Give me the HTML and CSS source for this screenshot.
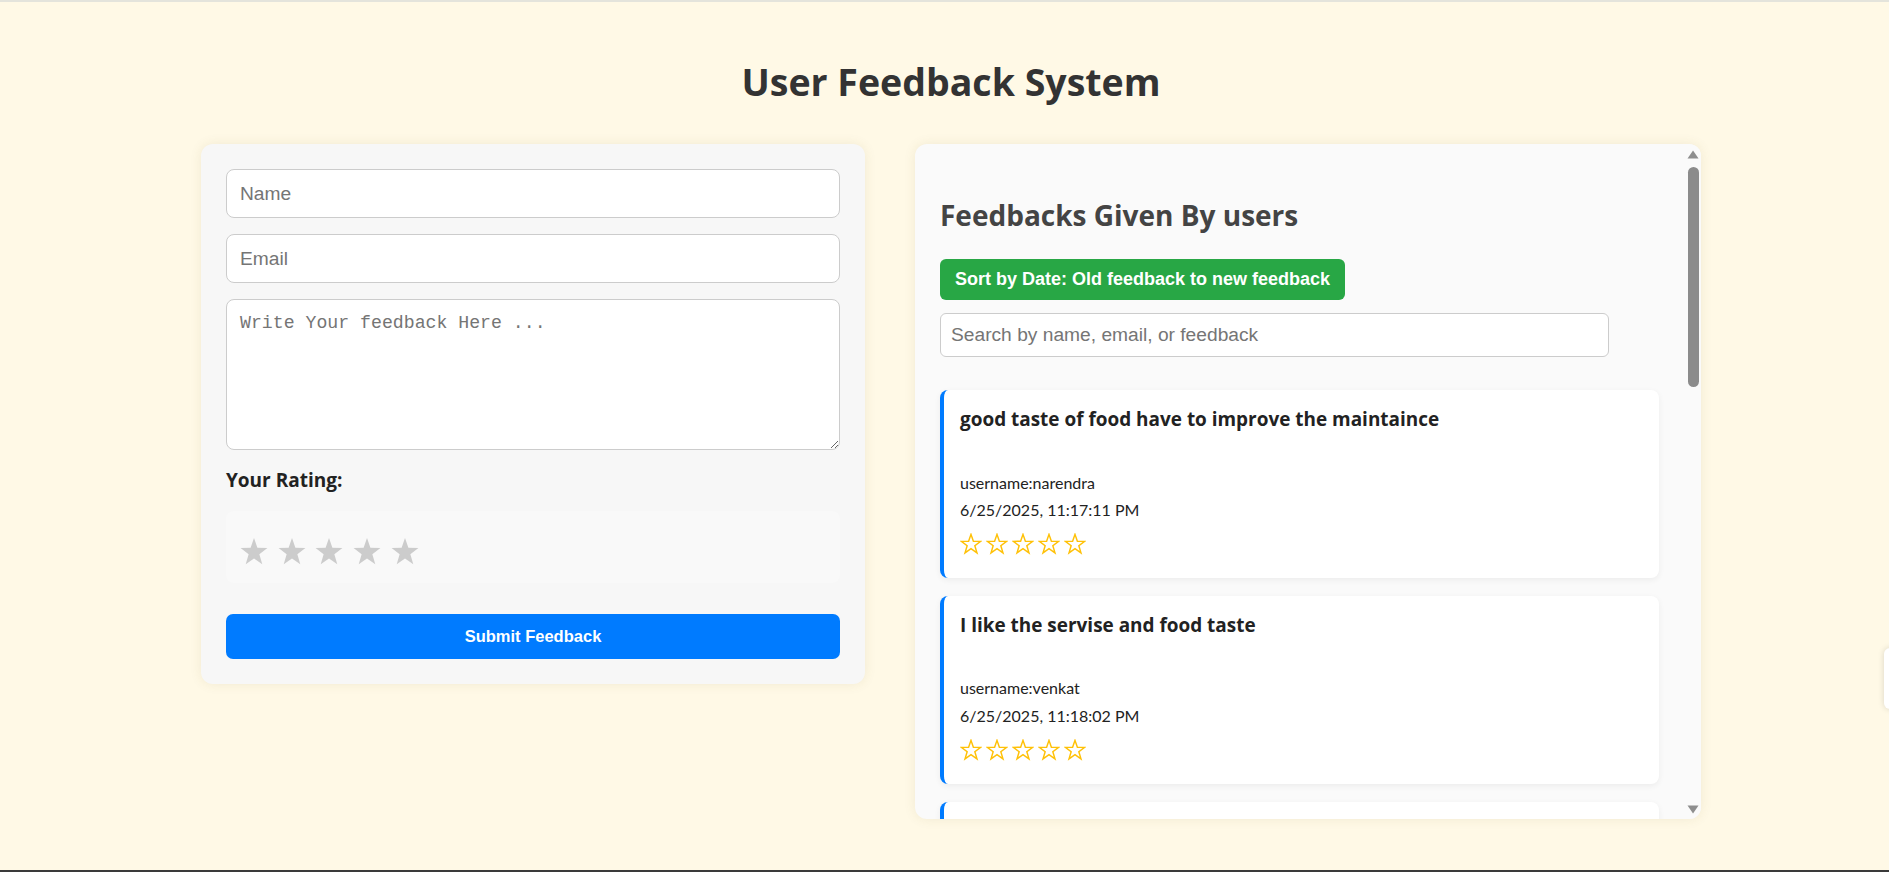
FILE: index.html
```html
<!DOCTYPE html>
<html lang="en">
<head>
<meta charset="utf-8">
<title>User Feedback System</title>
<link rel="stylesheet" href="styles.css">
</head>
<body>
<div class="page">
  <h1 class="title">User Feedback System</h1>
  <div class="layout">
    <form class="form-card">
      <input class="field" type="text" placeholder="Name">
      <input class="field" type="email" placeholder="Email">
      <textarea class="field field-area" placeholder="Write Your feedback Here ..."></textarea>
      <label class="rating-label">Your Rating:</label>
      <div class="stars-box">
        <svg class="star-big" viewBox="0 0 24 23"><polygon points="12,0 14.9,8.3 23.5,8.5 16.6,13.8 19.1,22.5 12,17.4 4.9,22.5 7.4,13.8 0.5,8.5 9.1,8.3"/></svg>
        <svg class="star-big" viewBox="0 0 24 23"><polygon points="12,0 14.9,8.3 23.5,8.5 16.6,13.8 19.1,22.5 12,17.4 4.9,22.5 7.4,13.8 0.5,8.5 9.1,8.3"/></svg>
        <svg class="star-big" viewBox="0 0 24 23"><polygon points="12,0 14.9,8.3 23.5,8.5 16.6,13.8 19.1,22.5 12,17.4 4.9,22.5 7.4,13.8 0.5,8.5 9.1,8.3"/></svg>
        <svg class="star-big" viewBox="0 0 24 23"><polygon points="12,0 14.9,8.3 23.5,8.5 16.6,13.8 19.1,22.5 12,17.4 4.9,22.5 7.4,13.8 0.5,8.5 9.1,8.3"/></svg>
        <svg class="star-big" viewBox="0 0 24 23"><polygon points="12,0 14.9,8.3 23.5,8.5 16.6,13.8 19.1,22.5 12,17.4 4.9,22.5 7.4,13.8 0.5,8.5 9.1,8.3"/></svg>
      </div>
      <button class="submit" type="button">Submit Feedback</button>
    </form>

    <section class="list-card">
      <div class="list-scroll">
        <h2 class="list-title">Feedbacks Given By users</h2>
        <button class="sort-btn" type="button">Sort by Date: Old feedback to new feedback</button>
        <input class="search" type="text" placeholder="Search by name, email, or feedback">

        <div class="fb-item">
          <h3 class="fb-text">good taste of food have to improve the maintaince</h3>
          <div class="fb-user">username:narendra</div>
          <div class="fb-date">6/25/2025, 11:17:11 PM</div>
          <div class="fb-stars">
            <svg class="star-o" viewBox="0 0 24 24"><polygon points="12,1.5 14.6,9 22.5,9.1 16.2,13.9 18.5,21.6 12,17 5.5,21.6 7.8,13.9 1.5,9.1 9.4,9"/></svg>
            <svg class="star-o" viewBox="0 0 24 24"><polygon points="12,1.5 14.6,9 22.5,9.1 16.2,13.9 18.5,21.6 12,17 5.5,21.6 7.8,13.9 1.5,9.1 9.4,9"/></svg>
            <svg class="star-o" viewBox="0 0 24 24"><polygon points="12,1.5 14.6,9 22.5,9.1 16.2,13.9 18.5,21.6 12,17 5.5,21.6 7.8,13.9 1.5,9.1 9.4,9"/></svg>
            <svg class="star-o" viewBox="0 0 24 24"><polygon points="12,1.5 14.6,9 22.5,9.1 16.2,13.9 18.5,21.6 12,17 5.5,21.6 7.8,13.9 1.5,9.1 9.4,9"/></svg>
            <svg class="star-o" viewBox="0 0 24 24"><polygon points="12,1.5 14.6,9 22.5,9.1 16.2,13.9 18.5,21.6 12,17 5.5,21.6 7.8,13.9 1.5,9.1 9.4,9"/></svg>
          </div>
        </div>

        <div class="fb-item">
          <h3 class="fb-text">I like the servise and food taste</h3>
          <div class="fb-user">username:venkat</div>
          <div class="fb-date">6/25/2025, 11:18:02 PM</div>
          <div class="fb-stars">
            <svg class="star-o" viewBox="0 0 24 24"><polygon points="12,1.5 14.6,9 22.5,9.1 16.2,13.9 18.5,21.6 12,17 5.5,21.6 7.8,13.9 1.5,9.1 9.4,9"/></svg>
            <svg class="star-o" viewBox="0 0 24 24"><polygon points="12,1.5 14.6,9 22.5,9.1 16.2,13.9 18.5,21.6 12,17 5.5,21.6 7.8,13.9 1.5,9.1 9.4,9"/></svg>
            <svg class="star-o" viewBox="0 0 24 24"><polygon points="12,1.5 14.6,9 22.5,9.1 16.2,13.9 18.5,21.6 12,17 5.5,21.6 7.8,13.9 1.5,9.1 9.4,9"/></svg>
            <svg class="star-o" viewBox="0 0 24 24"><polygon points="12,1.5 14.6,9 22.5,9.1 16.2,13.9 18.5,21.6 12,17 5.5,21.6 7.8,13.9 1.5,9.1 9.4,9"/></svg>
            <svg class="star-o" viewBox="0 0 24 24"><polygon points="12,1.5 14.6,9 22.5,9.1 16.2,13.9 18.5,21.6 12,17 5.5,21.6 7.8,13.9 1.5,9.1 9.4,9"/></svg>
          </div>
        </div>

        <div class="fb-item">
          <h3 class="fb-text">food is good but the waiting time is long</h3>
          <div class="fb-user">username:ravi</div>
          <div class="fb-date">6/25/2025, 11:19:40 PM</div>
          <div class="fb-stars">
            <svg class="star-o" viewBox="0 0 24 24"><polygon points="12,1.5 14.6,9 22.5,9.1 16.2,13.9 18.5,21.6 12,17 5.5,21.6 7.8,13.9 1.5,9.1 9.4,9"/></svg>
            <svg class="star-o" viewBox="0 0 24 24"><polygon points="12,1.5 14.6,9 22.5,9.1 16.2,13.9 18.5,21.6 12,17 5.5,21.6 7.8,13.9 1.5,9.1 9.4,9"/></svg>
            <svg class="star-o" viewBox="0 0 24 24"><polygon points="12,1.5 14.6,9 22.5,9.1 16.2,13.9 18.5,21.6 12,17 5.5,21.6 7.8,13.9 1.5,9.1 9.4,9"/></svg>
            <svg class="star-o" viewBox="0 0 24 24"><polygon points="12,1.5 14.6,9 22.5,9.1 16.2,13.9 18.5,21.6 12,17 5.5,21.6 7.8,13.9 1.5,9.1 9.4,9"/></svg>
            <svg class="star-o" viewBox="0 0 24 24"><polygon points="12,1.5 14.6,9 22.5,9.1 16.2,13.9 18.5,21.6 12,17 5.5,21.6 7.8,13.9 1.5,9.1 9.4,9"/></svg>
          </div>
        </div>

        <div class="fb-item">
          <h3 class="fb-text">nice ambience and friendly staff</h3>
          <div class="fb-user">username:suresh</div>
          <div class="fb-date">6/25/2025, 11:21:05 PM</div>
          <div class="fb-stars">
            <svg class="star-o" viewBox="0 0 24 24"><polygon points="12,1.5 14.6,9 22.5,9.1 16.2,13.9 18.5,21.6 12,17 5.5,21.6 7.8,13.9 1.5,9.1 9.4,9"/></svg>
            <svg class="star-o" viewBox="0 0 24 24"><polygon points="12,1.5 14.6,9 22.5,9.1 16.2,13.9 18.5,21.6 12,17 5.5,21.6 7.8,13.9 1.5,9.1 9.4,9"/></svg>
            <svg class="star-o" viewBox="0 0 24 24"><polygon points="12,1.5 14.6,9 22.5,9.1 16.2,13.9 18.5,21.6 12,17 5.5,21.6 7.8,13.9 1.5,9.1 9.4,9"/></svg>
            <svg class="star-o" viewBox="0 0 24 24"><polygon points="12,1.5 14.6,9 22.5,9.1 16.2,13.9 18.5,21.6 12,17 5.5,21.6 7.8,13.9 1.5,9.1 9.4,9"/></svg>
            <svg class="star-o" viewBox="0 0 24 24"><polygon points="12,1.5 14.6,9 22.5,9.1 16.2,13.9 18.5,21.6 12,17 5.5,21.6 7.8,13.9 1.5,9.1 9.4,9"/></svg>
          </div>
        </div>

        <div class="fb-item">
          <h3 class="fb-text">the rooms need better cleaning</h3>
          <div class="fb-user">username:kiran</div>
          <div class="fb-date">6/25/2025, 11:22:47 PM</div>
          <div class="fb-stars">
            <svg class="star-o" viewBox="0 0 24 24"><polygon points="12,1.5 14.6,9 22.5,9.1 16.2,13.9 18.5,21.6 12,17 5.5,21.6 7.8,13.9 1.5,9.1 9.4,9"/></svg>
            <svg class="star-o" viewBox="0 0 24 24"><polygon points="12,1.5 14.6,9 22.5,9.1 16.2,13.9 18.5,21.6 12,17 5.5,21.6 7.8,13.9 1.5,9.1 9.4,9"/></svg>
            <svg class="star-o" viewBox="0 0 24 24"><polygon points="12,1.5 14.6,9 22.5,9.1 16.2,13.9 18.5,21.6 12,17 5.5,21.6 7.8,13.9 1.5,9.1 9.4,9"/></svg>
            <svg class="star-o" viewBox="0 0 24 24"><polygon points="12,1.5 14.6,9 22.5,9.1 16.2,13.9 18.5,21.6 12,17 5.5,21.6 7.8,13.9 1.5,9.1 9.4,9"/></svg>
            <svg class="star-o" viewBox="0 0 24 24"><polygon points="12,1.5 14.6,9 22.5,9.1 16.2,13.9 18.5,21.6 12,17 5.5,21.6 7.8,13.9 1.5,9.1 9.4,9"/></svg>
          </div>
        </div>

        <div class="fb-item">
          <h3 class="fb-text">very tasty food and good service</h3>
          <div class="fb-user">username:mahesh</div>
          <div class="fb-date">6/25/2025, 11:24:13 PM</div>
          <div class="fb-stars">
            <svg class="star-o" viewBox="0 0 24 24"><polygon points="12,1.5 14.6,9 22.5,9.1 16.2,13.9 18.5,21.6 12,17 5.5,21.6 7.8,13.9 1.5,9.1 9.4,9"/></svg>
            <svg class="star-o" viewBox="0 0 24 24"><polygon points="12,1.5 14.6,9 22.5,9.1 16.2,13.9 18.5,21.6 12,17 5.5,21.6 7.8,13.9 1.5,9.1 9.4,9"/></svg>
            <svg class="star-o" viewBox="0 0 24 24"><polygon points="12,1.5 14.6,9 22.5,9.1 16.2,13.9 18.5,21.6 12,17 5.5,21.6 7.8,13.9 1.5,9.1 9.4,9"/></svg>
            <svg class="star-o" viewBox="0 0 24 24"><polygon points="12,1.5 14.6,9 22.5,9.1 16.2,13.9 18.5,21.6 12,17 5.5,21.6 7.8,13.9 1.5,9.1 9.4,9"/></svg>
            <svg class="star-o" viewBox="0 0 24 24"><polygon points="12,1.5 14.6,9 22.5,9.1 16.2,13.9 18.5,21.6 12,17 5.5,21.6 7.8,13.9 1.5,9.1 9.4,9"/></svg>
          </div>
        </div>

        <div class="fb-item">
          <h3 class="fb-text">prices are a little high</h3>
          <div class="fb-user">username:anil</div>
          <div class="fb-date">6/25/2025, 11:25:58 PM</div>
          <div class="fb-stars">
            <svg class="star-o" viewBox="0 0 24 24"><polygon points="12,1.5 14.6,9 22.5,9.1 16.2,13.9 18.5,21.6 12,17 5.5,21.6 7.8,13.9 1.5,9.1 9.4,9"/></svg>
            <svg class="star-o" viewBox="0 0 24 24"><polygon points="12,1.5 14.6,9 22.5,9.1 16.2,13.9 18.5,21.6 12,17 5.5,21.6 7.8,13.9 1.5,9.1 9.4,9"/></svg>
            <svg class="star-o" viewBox="0 0 24 24"><polygon points="12,1.5 14.6,9 22.5,9.1 16.2,13.9 18.5,21.6 12,17 5.5,21.6 7.8,13.9 1.5,9.1 9.4,9"/></svg>
            <svg class="star-o" viewBox="0 0 24 24"><polygon points="12,1.5 14.6,9 22.5,9.1 16.2,13.9 18.5,21.6 12,17 5.5,21.6 7.8,13.9 1.5,9.1 9.4,9"/></svg>
            <svg class="star-o" viewBox="0 0 24 24"><polygon points="12,1.5 14.6,9 22.5,9.1 16.2,13.9 18.5,21.6 12,17 5.5,21.6 7.8,13.9 1.5,9.1 9.4,9"/></svg>
          </div>
        </div>

        <div class="fb-item">
          <h3 class="fb-text">overall a good experience</h3>
          <div class="fb-user">username:priya</div>
          <div class="fb-date">6/25/2025, 11:27:31 PM</div>
          <div class="fb-stars">
            <svg class="star-o" viewBox="0 0 24 24"><polygon points="12,1.5 14.6,9 22.5,9.1 16.2,13.9 18.5,21.6 12,17 5.5,21.6 7.8,13.9 1.5,9.1 9.4,9"/></svg>
            <svg class="star-o" viewBox="0 0 24 24"><polygon points="12,1.5 14.6,9 22.5,9.1 16.2,13.9 18.5,21.6 12,17 5.5,21.6 7.8,13.9 1.5,9.1 9.4,9"/></svg>
            <svg class="star-o" viewBox="0 0 24 24"><polygon points="12,1.5 14.6,9 22.5,9.1 16.2,13.9 18.5,21.6 12,17 5.5,21.6 7.8,13.9 1.5,9.1 9.4,9"/></svg>
            <svg class="star-o" viewBox="0 0 24 24"><polygon points="12,1.5 14.6,9 22.5,9.1 16.2,13.9 18.5,21.6 12,17 5.5,21.6 7.8,13.9 1.5,9.1 9.4,9"/></svg>
            <svg class="star-o" viewBox="0 0 24 24"><polygon points="12,1.5 14.6,9 22.5,9.1 16.2,13.9 18.5,21.6 12,17 5.5,21.6 7.8,13.9 1.5,9.1 9.4,9"/></svg>
          </div>
        </div>
      </div>

      <div class="scrollbar" aria-hidden="true">
        <svg class="sb-arrow" viewBox="0 0 12 9"><path d="M6 0.5L11.5 8.5H0.5z"/></svg>
        <div class="sb-thumb"></div>
        <div class="sb-space"></div>
        <svg class="sb-arrow" viewBox="0 0 12 9"><path d="M6 8.5L11.5 0.5H0.5z"/></svg>
      </div>
    </section>
  </div>
  <div class="side-tab"></div>
</div>
</body>
</html>
```

FILE: styles.css
```css
* {
  box-sizing: border-box;
}

html, body {
  margin: 0;
  padding: 0;
}

body {
  background: #fff9e6;
  font-family: "Segoe UI", Lato, "Noto Sans", sans-serif;
  color: #222;
}

.page {
  min-height: 100vh;
  padding-left: 13px;
  border-top: 2px solid #e4e4dc;
  border-bottom: 2px solid #3a3a3a;
  overflow: hidden;
}

.title {
  margin: 56px 0 38px;
  text-align: center;
  font-family: "Open Sans", "Segoe UI", sans-serif;
  font-size: 37.5px;
  line-height: 48px;
  font-weight: 700;
  color: #333;
}

.layout {
  display: flex;
  justify-content: center;
  align-items: flex-start;
  gap: 50px;
}

/* ---------- form card ---------- */
.form-card {
  width: 664px;
  padding: 25px;
  background: #f7f7f7;
  border-radius: 12px;
  box-shadow: 0 0 12px rgba(120, 100, 40, 0.10);
}

.field {
  display: block;
  width: 100%;
  margin: 0 0 16px;
  padding: 12.5px 13px;
  font-family: "Liberation Sans", Arial, sans-serif;
  font-size: 19.2px;
  color: #222;
  background: #fff;
  border: 1px solid #ccc;
  border-radius: 8px;
  outline: none;
}

.field::placeholder,
.search::placeholder {
  color: #757575;
}

.field-area {
  height: 151px;
  margin-bottom: 0;
  padding: 13px 13px;
  font-family: "Liberation Mono", "DejaVu Sans Mono", monospace;
  font-size: 18.2px;
  resize: vertical;
}

.rating-label {
  display: block;
  margin: 19px 0 19px;
  font-family: "Open Sans", "Segoe UI", sans-serif;
  font-size: 19px;
  line-height: 23px;
  font-weight: 700;
  color: #222;
}

.stars-box {
  display: flex;
  gap: 9.7px;
  height: 72px;
  padding: 27px 14px 0;
  background: #f9f9f9;
  border-radius: 8px;
}

.star-big {
  width: 28px;
  height: 27px;
  fill: #cccccc;
}

.submit {
  display: block;
  width: 100%;
  height: 45px;
  margin-top: 31px;
  background: #007bff;
  color: #fff;
  border: 0;
  border-radius: 7px;
  font-family: "Liberation Sans", Arial, sans-serif;
  font-size: 16.5px;
  font-weight: 700;
}

/* ---------- list card ---------- */
.list-card {
  position: relative;
  width: 786px;
  height: 675px;
  overflow: hidden;
  background: #fafafa;
  border-radius: 12px;
  box-shadow: 0 0 12px rgba(120, 100, 40, 0.10);
}

.list-scroll {
  height: 100%;
  overflow-y: auto;
  padding: 25px 42px 25px 25px;
  scrollbar-width: none;
}

.list-scroll::-webkit-scrollbar {
  display: none;
}

.scrollbar {
  position: absolute;
  top: 0;
  right: 0;
  bottom: 0;
  width: 17px;
  padding: 6px 0 5px;
  display: flex;
  flex-direction: column;
  align-items: center;
  background: #fafafa;
}

.sb-arrow {
  width: 12px;
  height: 9px;
  fill: #8e8e8e;
  flex: none;
}

.sb-thumb {
  flex: none;
  width: 11px;
  height: 220px;
  margin-top: 8px;
  margin-left: 1px;
  background: #8b8b8b;
  border-radius: 6px;
}

.sb-space {
  flex: 1;
}

.list-title {
  margin: 29px 0 27px;
  font-family: "Open Sans", "Segoe UI", sans-serif;
  font-size: 28px;
  line-height: 34px;
  font-weight: 700;
  color: #444;
}

.sort-btn {
  display: block;
  height: 41px;
  margin-bottom: 13px;
  padding: 0 15px;
  background: #28a745;
  color: #fff;
  border: 0;
  border-radius: 6px;
  font-family: "Liberation Sans", Arial, sans-serif;
  font-size: 18px;
  font-weight: 700;
}

.search {
  display: block;
  box-sizing: content-box;
  width: 90%;
  margin-bottom: 33px;
  padding: 10px;
  font-family: "Liberation Sans", Arial, sans-serif;
  font-size: 19.2px;
  background: #fff;
  border: 1px solid #ccc;
  border-radius: 6px;
  outline: none;
}

.fb-item {
  padding: 18px 15px 23px 16px;
  margin-bottom: 18px;
  background: #fff;
  border-left: 4px solid #007bff;
  border-radius: 8px;
  box-shadow: 0 2px 6px rgba(0, 0, 0, 0.06);
}

.fb-item:last-child {
  margin-bottom: 0;
}

.fb-text {
  margin: 0 0 42px;
  font-family: "Open Sans", "Segoe UI", sans-serif;
  font-size: 18.95px;
  line-height: 22.5px;
  font-weight: 700;
  color: #222;
}

.fb-user,
.fb-date {
  font-size: 16px;
  line-height: 19.2px;
  color: #222;
}

.fb-user {
  margin-bottom: 8px;
}

.fb-date {
  margin-bottom: 14px;
}

.fb-stars {
  display: flex;
  gap: 4px;
  height: 22px;
}

.star-o {
  width: 22px;
  height: 22px;
  fill: none;
  stroke: #ffc107;
  stroke-width: 1.6;
  stroke-linejoin: miter;
}

.side-tab {
  position: fixed;
  left: 1884px;
  top: 648px;
  width: 30px;
  height: 61px;
  background: #fff;
  border-radius: 6px;
  box-shadow: 0 0 6px rgba(0, 0, 0, 0.15);
}
```
